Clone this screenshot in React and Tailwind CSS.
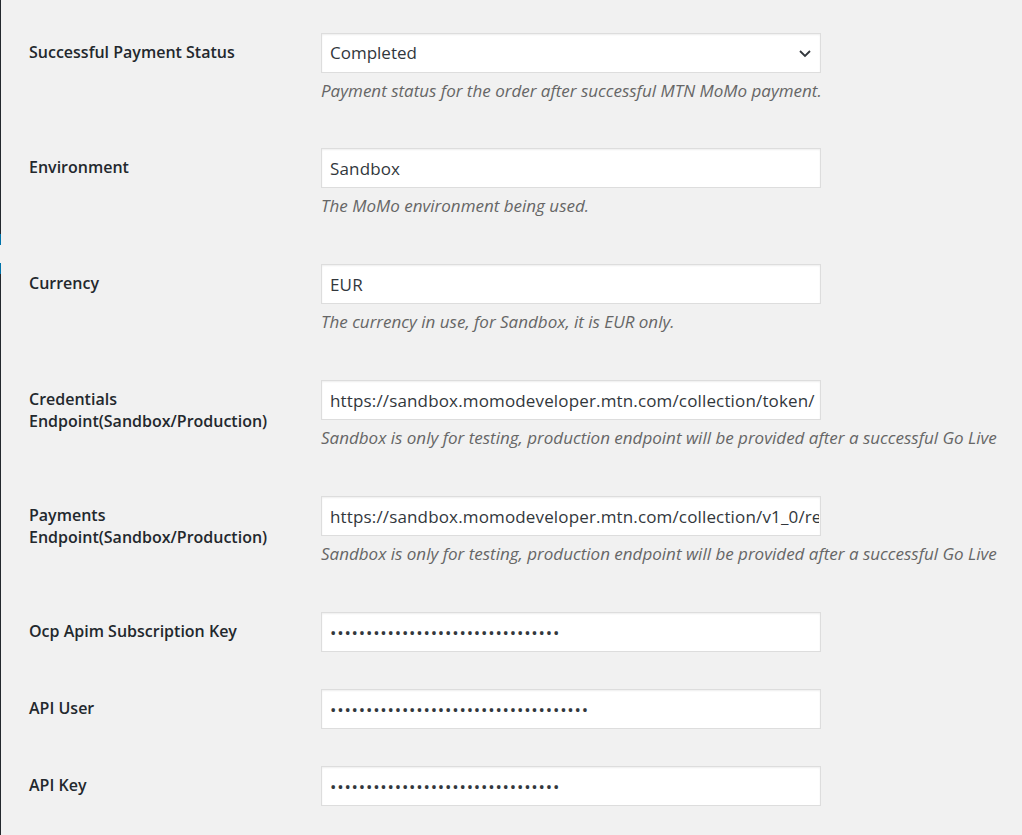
import React from "react";

const rows = [
  { label: "Successful Payment Status", type: "select", value: "Completed", desc: "Payment status for the order after successful MTN MoMo payment." },
  { label: "Environment", value: "Sandbox", desc: "The MoMo environment being used." },
  { label: "Currency", value: "EUR", desc: "The currency in use, for Sandbox, it is EUR only." },
  { label: "Credentials Endpoint(Sandbox/Production)", value: "https://sandbox.momodeveloper.mtn.com/collection/token/", desc: "Sandbox is only for testing, production endpoint will be provided after a successful Go Live" },
  { label: "Payments Endpoint(Sandbox/Production)", value: "https://sandbox.momodeveloper.mtn.com/collection/v1_0/requesttopay", desc: "Sandbox is only for testing, production endpoint will be provided after a successful Go Live" },
  { label: "Ocp Apim Subscription Key", type: "password", value: "abcdef0123456789abcdef0123456789" },
  { label: "API User", type: "password", value: "abcdef01-2345-6789-abcd-ef0123456789" },
  { label: "API Key", type: "password", value: "abcdef0123456789abcdef0123456789" },
];

function Field({ row }) {
  const base =
    "w-[500px] h-10 bg-white border border-[#dddddd] shadow-[inset_0_1px_2px_rgba(0,0,0,0.07)] text-[17px] text-[#32373c] outline-none";
  if (row.type === "select") {
    return (
      <div className={`${base} flex items-center justify-between pl-2 pr-[8px]`}>
        <span>{row.value}</span>
        <svg width="14" height="9" viewBox="0 0 14 9" fill="none">
          <path d="M2 2 L7 7 L12 2" stroke="#32373c" strokeWidth="1.8" />
        </svg>
      </div>
    );
  }
  return (
    <input
      readOnly
      type={row.type === "password" ? "password" : "text"}
      defaultValue={row.value}
      className={`${base} pl-2 pr-[1px] ${row.type === "password" ? "tracking-[0.8px]" : "tracking-[0.15px]"}`}
    />
  );
}

export default function App() {
  return (
    <div
      className="flex min-h-[835px] bg-[#f1f1f1]"
      style={{ fontFamily: '"Open Sans", "Noto Sans", sans-serif' }}
    >
      <div className="w-px flex flex-col">
        <div className="h-[234px] bg-[#23282d]" />
        <div className="h-[11px] bg-[#0073aa]" />
        <div className="h-[18px]" />
        <div className="h-[11px] bg-[#0073aa]" />
        <div className="flex-1 bg-[#23282d]" />
      </div>
      <div className="flex-1 pt-[18px] pl-[28px]">
        {rows.map((row, i) => (
          <div
            key={i}
            className={`flex pt-[15px] ${
              row.desc ? (i === 0 ? "pb-[31px]" : "pb-[32px]") : "pb-[22px]"
            }`}
          >
            <div className="w-[292px] pt-[8px] pr-[10px] text-[16px] leading-[22px] font-semibold text-[#23282d]">
              {row.label}
            </div>
            <div>
              <Field row={row} />
              {row.desc && (
                <p className="mt-[7px] text-[17px] leading-[22px] italic text-[#666666] whitespace-nowrap">
                  {row.desc}
                </p>
              )}
            </div>
          </div>
        ))}
      </div>
    </div>
  );
}
